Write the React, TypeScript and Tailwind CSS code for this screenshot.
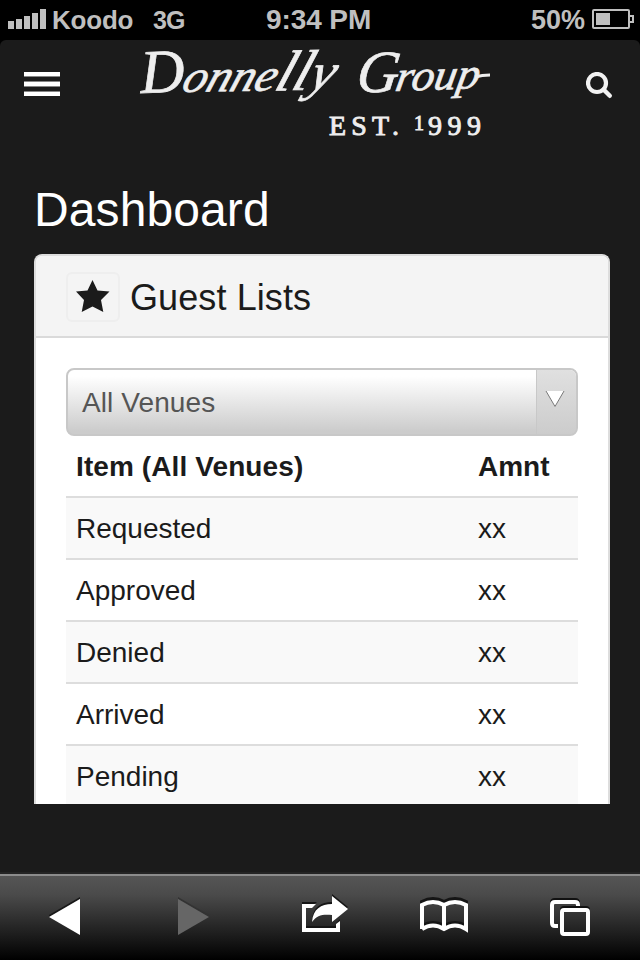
import React from 'react';

const rows = ['Requested', 'Approved', 'Denied', 'Arrived', 'Pending'];

function StatusBar() {
  return (
    <div className="flex h-10 shrink-0 bg-black text-[#bfbfbf] font-bold leading-10">
      <div className="flex w-[266px] pl-2">
        <svg width="38" height="40" viewBox="0 0 38 40" fill="#bfbfbf" shapeRendering="crispEdges">
          <path d="M0 21h6v8H0zM8 19h6v10H8zM16 16h6v13h-6zM24 13h6v16h-6zM32 9h6v20h-6z" />
        </svg>
        <span className="ml-[6px] w-[101px] text-[26px] tracking-[-0.2px]">Koodo</span>
        <span className="text-[25px] tracking-[-0.8px]">3G</span>
      </div>
      <div className="w-[265px] text-[28px] tracking-[-0.1px]">9:34 PM</div>
      <span className="w-[61px] text-[27px]">50%</span>
      <svg width="43" height="40" viewBox="0 0 43 40">
        <rect x="1" y="10" width="36" height="18" rx="1" fill="none" stroke="#bfbfbf" strokeWidth="2" />
        <rect x="4" y="13" width="14" height="12" fill="#bfbfbf" />
        <path d="M38 16h3v6h-3" fill="none" stroke="#bfbfbf" strokeWidth="2" />
      </svg>
    </div>
  );
}

function Logo() {
  return (
    <svg className="overflow-visible" width="352" height="104" viewBox="0 0 352 104" fill="#eeeeee">
      <g fontFamily="'Liberation Serif', serif" fontStyle="italic" stroke="#eeeeee" strokeWidth=".7">
        <text x="0" y="0" fontSize="62" textLength="44" lengthAdjust="spacingAndGlyphs" transform="translate(1 53) rotate(-2)">D</text>
        <text x="0" y="0" fontSize="45" textLength="151" lengthAdjust="spacingAndGlyphs" transform="translate(40 52) rotate(-1) skewX(-20)">
          onne<tspan fontSize="57">ll</tspan><tspan fontSize="52">y</tspan>
        </text>
        <text x="0" y="0" fontSize="60" textLength="42" lengthAdjust="spacingAndGlyphs" transform="translate(215 52) skewX(-8)">G</text>
        <text x="0" y="0" fontSize="43" textLength="84" lengthAdjust="spacingAndGlyphs" transform="translate(254 51) rotate(-2) skewX(-12)">roup</text>
      </g>
      <path d="M335 37Q342 35 350 35" fill="none" stroke="#eeeeee" strokeWidth="3" />
      <g fontFamily="'Liberation Serif', serif" stroke="#eeeeee" strokeWidth=".9">
        <text x="189" y="95" fontSize="28" textLength="70" lengthAdjust="spacing">EST.</text>
        <text x="274" y="90" fontSize="20">1</text>
        <text x="288" y="95" fontSize="28" textLength="53" lengthAdjust="spacing">999</text>
      </g>
    </svg>
  );
}

function Header() {
  return (
    <header className="flex h-[104px] shrink-0 items-start rounded-t-md bg-[#1b1b1b]">
      <svg className="mr-20 ml-6 mt-8" width="36" height="25" viewBox="0 0 36 25" shapeRendering="crispEdges">
        <path d="M0 0h36v4H0zM0 10h36v4H0zM0 20h36v4H0z" fill="white" />
        <path d="M0 4h36v1H0zM0 9h36v1H0zM0 14h36v1H0zM0 19h36v1H0z" fill="#858585" />
      </svg>
      <Logo />
      <svg className="ml-[94px] mt-8" width="28" height="28" viewBox="0 0 28 28" fill="none" stroke="#f2f2f2">
        <circle cx="11" cy="11" r="9" strokeWidth="4.2" />
        <path d="m17.5 17.5 6.3 6.3" strokeWidth="4.4" strokeLinecap="round" />
      </svg>
    </header>
  );
}

function GuestLists() {
  return (
    <section className="ml-[34px] h-[550px] w-[576px] shrink-0 overflow-hidden rounded-t-lg border-2 border-b-0 border-[#dddddd] bg-white">
      <div className="flex h-[82px] items-center border-b-2 border-[#dadada] bg-[#f4f4f4] pl-[30px]">
        <div className="mt-0.5 flex h-[50px] w-[54px] items-center justify-center rounded-md border-2 border-[#eeeeee]">
          <svg className="-mt-0.5" width="34" height="32" viewBox="0 0 34 32" fill="#1b1b1b">
            <path d="M16.5 0 21.5 10.5 33.5 11.5 25 20 27.3 32 16.5 26.5 5.7 32 8 20 0 11.5 11.5 10.5z" />
          </svg>
        </div>
        <h2 className="ml-[10px] mt-1 text-[36px] leading-10 tracking-[0.1px]">Guest Lists</h2>
      </div>
      <div className="px-[30px] pt-[30px]">
        <div className="flex h-[68px] overflow-hidden rounded-lg border-2 border-[#c8c8c8] bg-[linear-gradient(#ffffff_10%,#cccccc_95%)]">
          <span className="flex-1 pl-3.5 text-[28px] leading-[66px] tracking-[0.1px] text-[#555555]">All Venues</span>
          <div className="flex w-10 justify-center border-l border-[#c8c8c8] bg-[linear-gradient(#e0e0e0,#cccccc)] pr-[3px] pt-[20px]">
            <svg width="20" height="18" viewBox="0 0 20 18">
              <path d="M1 1h18L10 17z" fill="white" />
              <path d="m1 1 9 15.5L19 1" fill="none" stroke="#777777" strokeWidth="1" />
            </svg>
          </div>
        </div>
        <table className="w-full table-fixed text-left text-[28px] leading-[58px]">
          <thead>
            <tr>
              <th className="h-[60px] w-[402px] p-0 pl-2.5 pt-0.5 tracking-[0.1px]">Item (All Venues)</th>
              <th className="p-0 pl-2.5 pt-0.5">Amnt</th>
            </tr>
          </thead>
          <tbody>
            {rows.map((row) => (
              <tr key={row} className="group border-t-2 border-[#dddddd] odd:bg-[#f9f9f9]">
                <td className="h-[62px] p-0 pl-2.5 pt-0.5 group-last:pt-0">{row}</td>
                <td className="p-0 pl-2.5 pt-0.5 group-last:pt-0">xx</td>
              </tr>
            ))}
          </tbody>
        </table>
      </div>
    </section>
  );
}

function Toolbar() {
  return (
    <footer className="h-[88px] shrink-0 border-t-2 border-[#242424] bg-[linear-gradient(#8c8c8c_0px,#8c8c8c_2px,#555555_2px,#4b4b4b_20px,#292929_50px,#000000_86px)]">
      <svg width="640" height="86" viewBox="0 874 640 86">
        <path d="M49 915 80 897v2L49 917z" fill="#181818" />
        <path d="M49 917 80 899v36z" fill="white" />
        <path d="M178 897l31 18v2l-31-18z" fill="#333333" />
        <path d="M178 899v36l31-18z" fill="#666666" />
        <g transform="translate(0 -2)" fill="#151515">
          <path d="M317 904H302v28h38v-11l-4 4v3h-30v-20h6z" />
          <path d="M312 922c1-13 9-18 20-18v-8l16 13-16 13v-7c-9-1-15 0-20 7z" />
        </g>
        <g fill="white">
          <path d="M316 904H302v28h38v-11l-4 3v4h-30v-20h6z" />
          <path d="M312 922c1-13 9-18 20-18v-8l16 13-16 13v-7c-9-1-15 0-20 7z" />
        </g>
        <g fill="none" strokeWidth="4">
          <path d="M422 928v-24q11-6 22 0 11-6 22 0v24" stroke="#151515" transform="translate(0 -2)" />
          <path d="M422 928q11-6 22 0 11-6 22 0" stroke="#151515" transform="translate(0 -2)" />
          <path d="M422 929v-24q11-6 22 0 11-6 22 0v24q-11-7-22 0-11-7-22 0M444 904v25" stroke="white" />
          <path d="M578 906v-3q0-3-3-3h-20q-3 0-3 3v20q0 3 3 3h3" stroke="#111111" />
          <path d="M578 907v-2q0-3-3-3h-20q-3 0-3 3v18q0 3 3 3h3" stroke="white" />
          <rect x="562" y="908" width="26" height="26" rx="2" stroke="#111111" />
          <rect x="562" y="910" width="26" height="24" rx="2" stroke="white" />
        </g>
      </svg>
    </footer>
  );
}

export default function App() {
  return (
    <div className="flex h-[960px] w-[640px] flex-col overflow-hidden bg-black font-['Liberation_Sans',Arial,sans-serif] text-[#1b1b1b]">
      <StatusBar />
      <Header />
      <main className="flex h-[728px] shrink-0 flex-col bg-[#1b1b1b]">
        <h1 className="h-[110px] shrink-0 pl-[34px] pt-[38px] text-[48px] leading-[56px] tracking-[0.1px] text-white">Dashboard</h1>
        <GuestLists />
      </main>
      <Toolbar />
    </div>
  );
}
